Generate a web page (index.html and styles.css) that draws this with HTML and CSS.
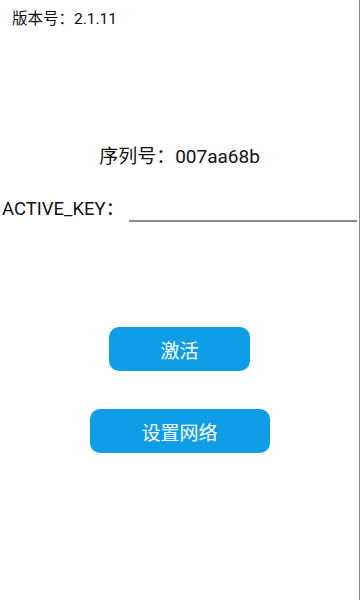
FILE: index.html
```html
<!DOCTYPE html>
<html lang="zh">
<head>
<meta charset="utf-8">
<link rel="stylesheet" href="styles.css">
</head>
<body>
<div class="page">
  <div class="version">版本号：2.1.11</div>
  <div class="serial">序列号：007aa68b</div>
  <div class="key-row">
    <span class="key-label">ACTIVE_KEY：</span>
    <span class="key-input"></span>
  </div>
  <div class="actions">
    <button class="btn btn-activate">激活</button>
    <button class="btn btn-network">设置网络</button>
  </div>
</div>
</body>
</html>
```
FILE: styles.css
```css
html, body {
  margin: 0;
  padding: 0;
  background: #ffffff;
}
body {
  font-family: Roboto, "Noto Sans CJK SC", sans-serif;
  color: #111111;
}
.page {
  width: 359px;
  height: 600px;
  border-right: 1px solid #8a8a8a;
  display: flex;
  flex-direction: column;
}
.version {
  font-size: 15.5px;
  line-height: 20px;
  padding: 9px 0 0 12px;
}
.serial {
  font-size: 19px;
  line-height: 24px;
  text-align: center;
  margin-top: 116px;
}
.key-row {
  display: flex;
  align-items: flex-end;
  margin-top: 28px;
  padding-left: 2px;
  padding-right: 2px;
}
.key-label {
  font-size: 18.5px;
  line-height: 24px;
}
.key-input {
  flex: 1;
  margin-left: 5px;
  height: 0;
  border-bottom: 2px solid #8a8a8a;
  margin-bottom: -1px;
}
.actions {
  display: flex;
  flex-direction: column;
  align-items: center;
  margin-top: 106px;
  gap: 38px;
}
.btn {
  border: none;
  background: #0f9de7;
  color: #ffffff;
  font-family: Roboto, "Noto Sans CJK SC", sans-serif;
  font-size: 19px;
  border-radius: 10px;
  height: 44px;
  padding: 0;
}
.btn-activate {
  width: 141px;
}
.btn-network {
  width: 180px;
}
```
